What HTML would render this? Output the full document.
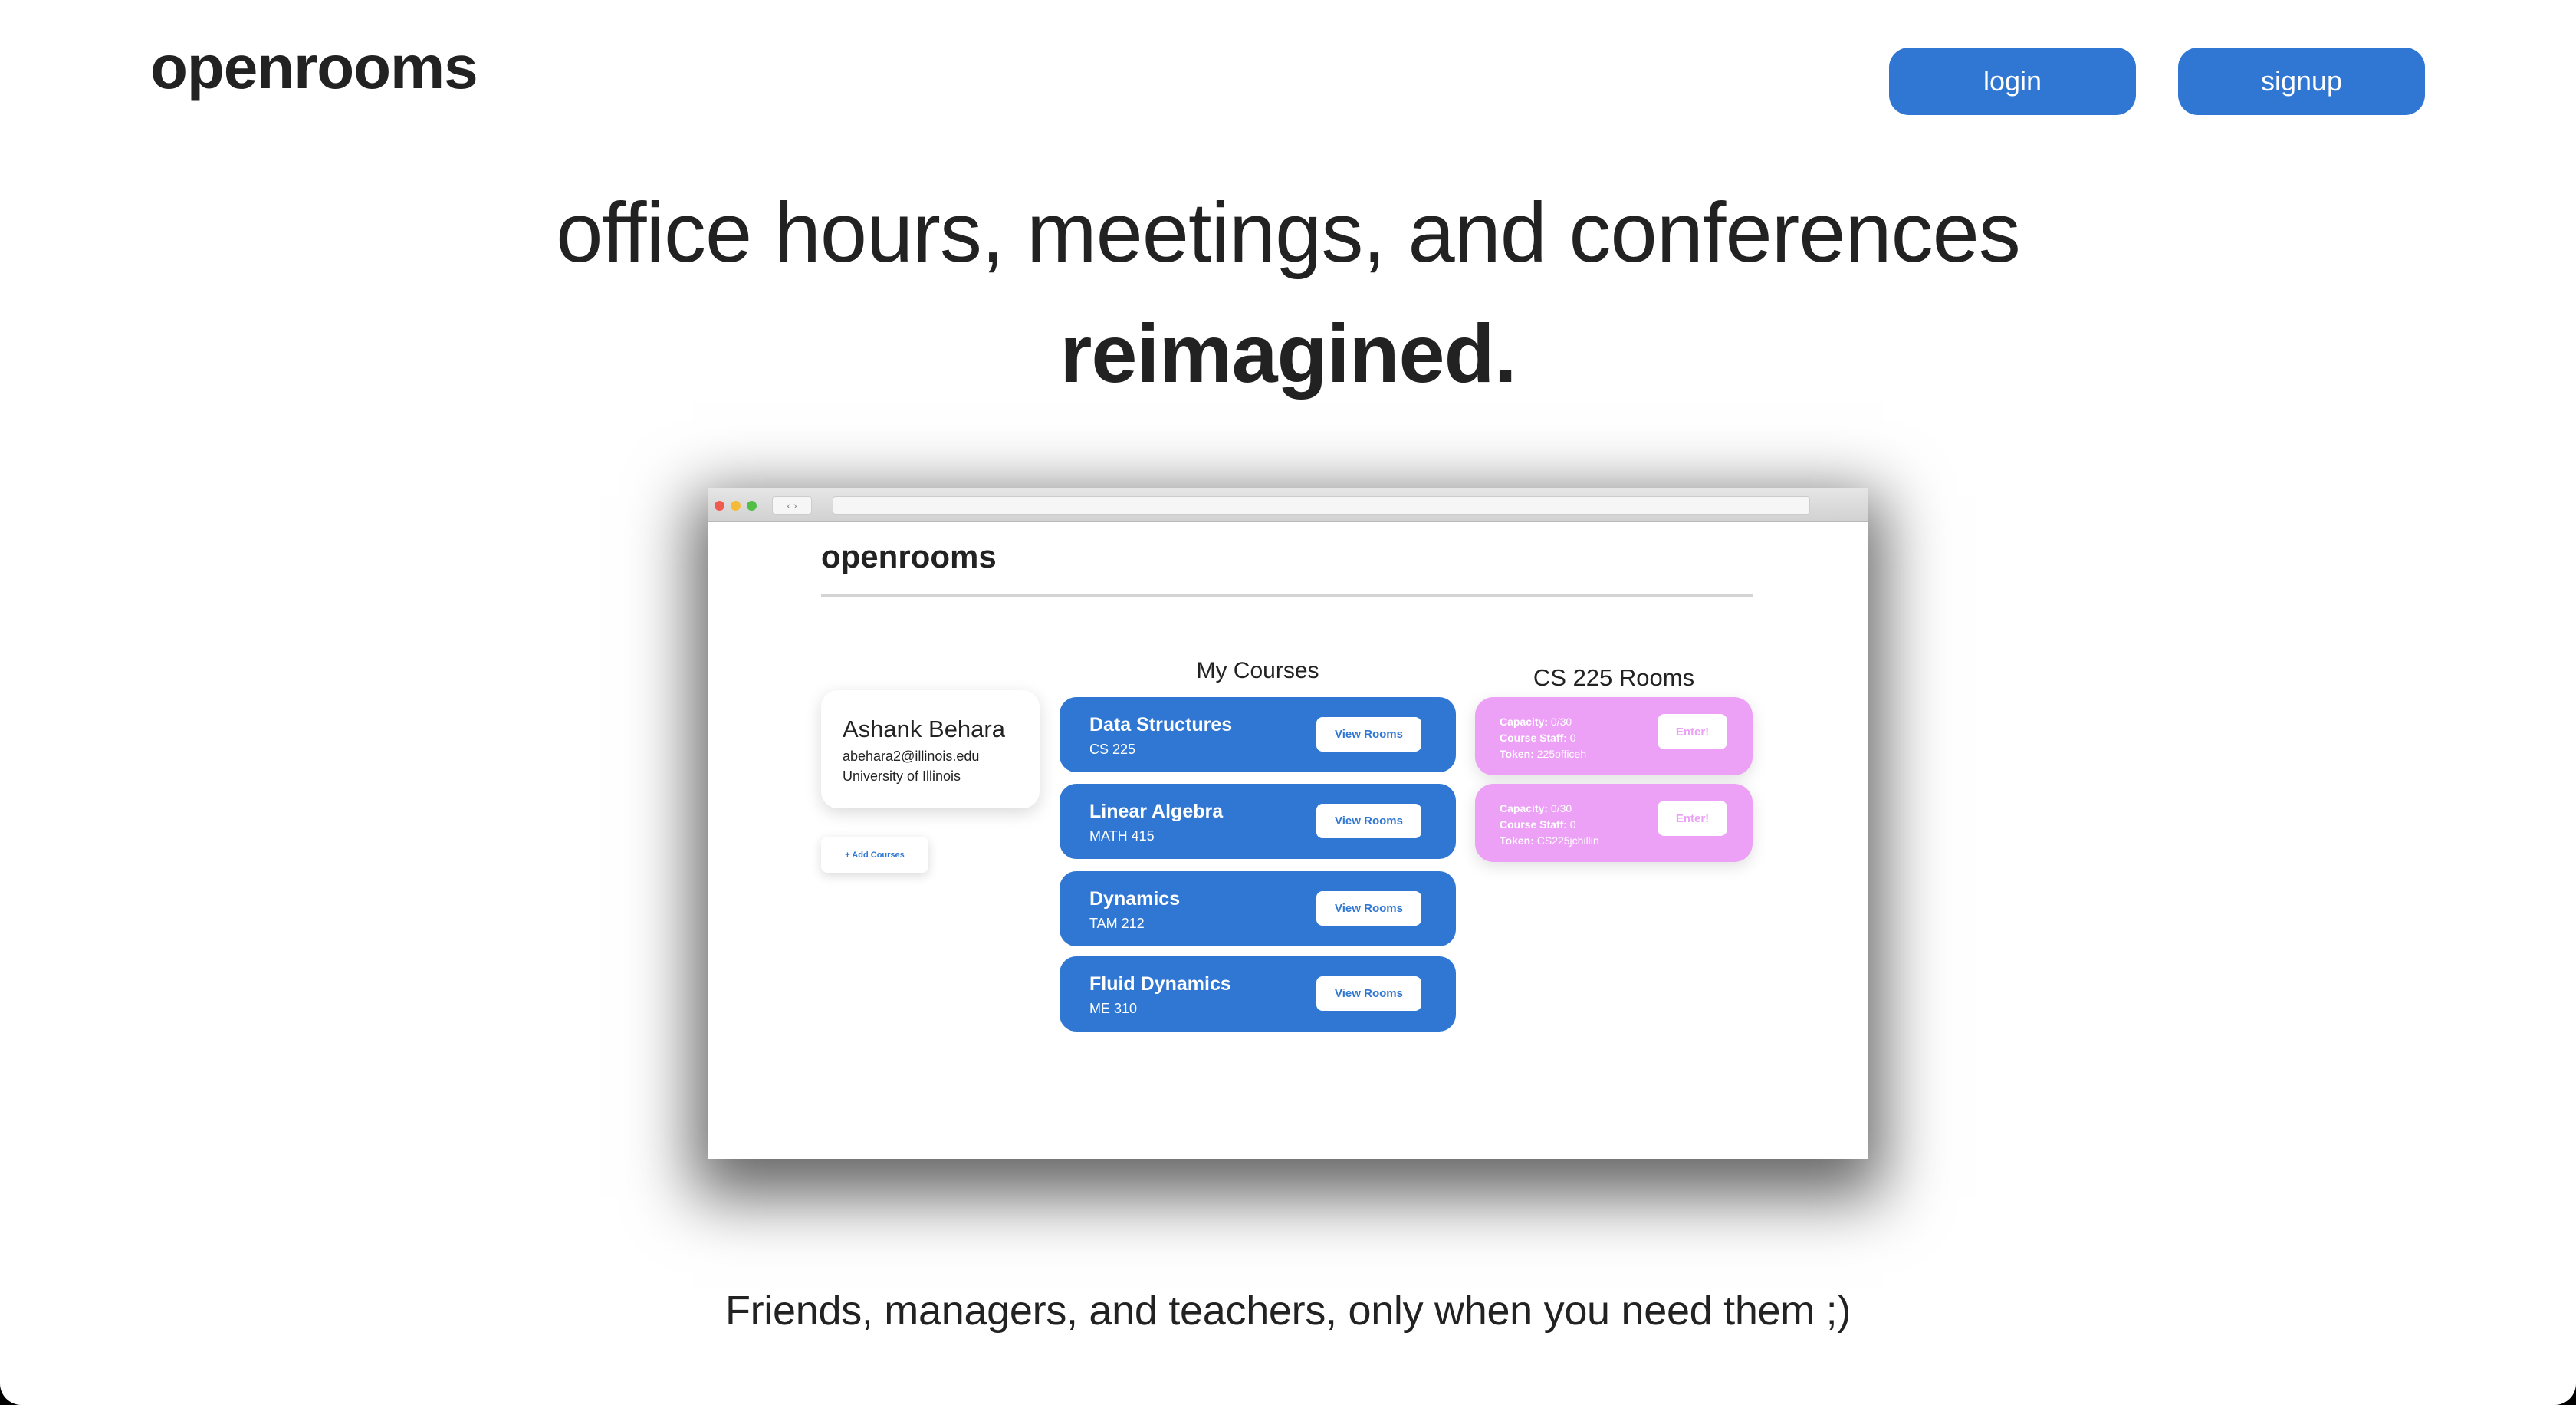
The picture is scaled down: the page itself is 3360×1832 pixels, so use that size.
<!DOCTYPE html>
<html><head><meta charset="utf-8"><style>
*{margin:0;padding:0;box-sizing:border-box}
html,body{width:3360px;height:1832px;overflow:hidden;background:#000}
body{font-family:"Liberation Sans",sans-serif;color:#222}
#page{position:absolute;left:0;top:0;width:3360px;height:1832px;background:#fff;border-radius:0 0 28px 28px;overflow:hidden}
.a{position:absolute;white-space:nowrap}
.btn{position:absolute;background:#2f77d3;color:#fff;border-radius:26px;font-size:36px;display:flex;align-items:center;justify-content:center}
.mock{position:absolute;left:924px;top:636px;width:1512px;height:875px;background:#fff;box-shadow:0 30px 80px 20px rgba(0,0,0,0.6)}
.bar{position:absolute;left:0;top:0;width:1512px;height:45px;background:linear-gradient(#e6e6e6,#d2d2d2);border-bottom:2px solid #b8b8b8}
.dot{position:absolute;top:17px;width:13px;height:13px;border-radius:50%}
.card{position:absolute;left:458px;width:517px;height:98px;background:#2f77d3;border-radius:22px;color:#fff}
.card .t{position:absolute;left:39px;top:22px;font-size:25px;font-weight:bold}
.card .c{position:absolute;left:39px;top:58px;font-size:18px}
.card .v{position:absolute;left:335px;top:26px;width:137px;height:45px;background:#fff;border-radius:8px;color:#2f77d3;font-size:15px;font-weight:bold;display:flex;align-items:center;justify-content:center}
.room{position:absolute;left:1000px;width:362px;height:102px;background:#eca0f6;border-radius:24px;color:#fff;box-shadow:0 6px 20px rgba(0,0,0,0.12)}
.room .l{position:absolute;left:32px;font-size:14px;line-height:21px;top:22px}
.room .e{position:absolute;left:238px;top:22px;width:91px;height:46px;background:#fff;border-radius:9px;color:#eca0f6;font-size:15px;font-weight:bold;display:flex;align-items:center;justify-content:center}
</style></head><body><div id="page">
<div class="a" style="left:196px;top:42px;font-size:80px;font-weight:bold;letter-spacing:-1px">openrooms</div>
<div class="btn" style="left:2464px;top:62px;width:322px;height:88px">login</div>
<div class="btn" style="left:2841px;top:62px;width:322px;height:88px">signup</div>
<div class="a" style="left:0;width:3360px;text-align:center;top:240px;font-size:110px;letter-spacing:-1px">office hours, meetings, and conferences</div>
<div class="a" style="left:0;width:3360px;text-align:center;top:398px;font-size:108px;font-weight:bold;letter-spacing:-1px">reimagined.</div>
<div class="mock">
 <div class="bar">
  <div class="dot" style="left:8px;background:#f05b50"></div>
  <div class="dot" style="left:29px;background:#f4bb3a"></div>
  <div class="dot" style="left:50px;background:#4fbf45"></div>
  <div style="position:absolute;left:83px;top:11px;width:52px;height:24px;background:#f6f6f6;border:1px solid #ccc;border-radius:4px;font-size:14px;color:#888;line-height:22px;text-align:center">‹ ›</div>
  <div style="position:absolute;left:162px;top:11px;width:1275px;height:24px;background:#f6f6f6;border:1px solid #ccc;border-radius:4px"></div>
 </div>
 <div class="a" style="left:147px;top:66px;font-size:42px;font-weight:bold">openrooms</div>
 <div style="position:absolute;left:147px;top:138px;width:1215px;height:4px;background:#d4d4d4"></div>
 <div class="a" style="left:458px;width:517px;text-align:center;top:222px;font-size:30px">My Courses</div>
 <div class="a" style="left:1000px;width:362px;text-align:center;top:230px;font-size:31px">CS 225 Rooms</div>
 <div style="position:absolute;left:147px;top:264px;width:285px;height:154px;background:#fff;border-radius:22px;box-shadow:0 6px 22px rgba(0,0,0,0.15)">
  <div class="a" style="left:28px;top:33px;font-size:31px">Ashank Behara</div>
  <div class="a" style="left:28px;top:76px;font-size:18px">abehara2@illinois.edu</div>
  <div class="a" style="left:28px;top:102px;font-size:18px">University of Illinois</div>
 </div>
 <div style="position:absolute;left:147px;top:455px;width:140px;height:47px;background:#fff;border-radius:8px;box-shadow:0 4px 14px rgba(0,0,0,0.15);color:#2f77d3;font-size:11px;font-weight:bold;display:flex;align-items:center;justify-content:center">+ Add Courses</div>
 <div class="card" style="top:273px"><div class="t">Data Structures</div><div class="c">CS 225</div><div class="v">View Rooms</div></div>
 <div class="card" style="top:386px"><div class="t">Linear Algebra</div><div class="c">MATH 415</div><div class="v">View Rooms</div></div>
 <div class="card" style="top:500px"><div class="t">Dynamics</div><div class="c">TAM 212</div><div class="v">View Rooms</div></div>
 <div class="card" style="top:611px"><div class="t">Fluid Dynamics</div><div class="c">ME 310</div><div class="v">View Rooms</div></div>
 <div class="room" style="top:273px"><div class="l"><b>Capacity:</b> 0/30<br><b>Course Staff:</b> 0<br><b>Token:</b> 225officeh</div><div class="e">Enter!</div></div>
 <div class="room" style="top:386px"><div class="l"><b>Capacity:</b> 0/30<br><b>Course Staff:</b> 0<br><b>Token:</b> CS225jchillin</div><div class="e">Enter!</div></div>
</div>
<div class="a" style="left:0;width:3360px;text-align:center;top:1678px;font-size:54px;letter-spacing:-0.3px">Friends, managers, and teachers, only when you need them ;)</div>
</div></body></html>
